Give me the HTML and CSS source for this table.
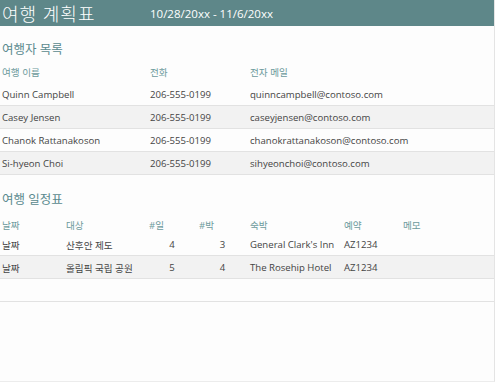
FILE: index.html
```html
<!DOCTYPE html>
<html lang="ko">
<head>
<meta charset="UTF-8" />
<title>여행 계획표</title>
<link rel="stylesheet" href="styles.css">
</head>
<body>
<div class="page">
    <div class="banner">
        <span class="banner-title">여행 계획표</span>
        <span class="banner-dates">10/28/20xx - 11/6/20xx</span>
    </div>

    <h2 class="section-title">여행자 목록</h2>
    <table class="grid travelers">
        <colgroup>
            <col style="width:148px">
            <col style="width:100px">
            <col>
        </colgroup>
        <thead>
            <tr><th>여행 이름</th><th>전화</th><th>전자 메일</th></tr>
        </thead>
        <tbody>
            <tr><td>Quinn Campbell</td><td>206-555-0199</td><td>quinncampbell@contoso.com</td></tr>
            <tr><td>Casey Jensen</td><td>206-555-0199</td><td>caseyjensen@contoso.com</td></tr>
            <tr><td>Chanok Rattanakoson</td><td>206-555-0199</td><td>chanokrattanakoson@contoso.com</td></tr>
            <tr><td>Si-hyeon Choi</td><td>206-555-0199</td><td>sihyeonchoi@contoso.com</td></tr>
        </tbody>
    </table>

    <h2 class="section-title second">여행 일정표</h2>
    <table class="grid schedule">
        <colgroup>
            <col style="width:64px">
            <col style="width:83px">
            <col style="width:50px">
            <col style="width:51px">
            <col style="width:94px">
            <col style="width:59px">
            <col>
        </colgroup>
        <thead>
            <tr><th>날짜</th><th>대상</th><th>#일</th><th>#박</th><th>숙박</th><th>예약</th><th>메모</th></tr>
        </thead>
        <tbody>
            <tr><td>날짜</td><td>산후안 제도</td><td class="num">4</td><td class="num">3</td><td>General Clark's Inn</td><td>AZ1234</td><td></td></tr>
            <tr><td>날짜</td><td>올림픽 국립 공원</td><td class="num">5</td><td class="num">4</td><td>The Rosehip Hotel</td><td>AZ1234</td><td></td></tr>
            <tr class="blank"><td></td><td></td><td></td><td></td><td></td><td></td><td></td></tr>
        </tbody>
    </table>
</div>
</body>
</html>
```

FILE: styles.css
```css
body {
    margin: 0;
    background: #fff;
    font-family: "Open Sans", "Noto Sans CJK KR", sans-serif;
    color: #444;
}
.page {
    width: 494px;
    height: 381px;
    border-right: 1px solid #e4e4e4;
    border-bottom: 1px solid #ececec;
    background: #fdfdfd;
    overflow: hidden;
}
.banner {
    display: flex;
    align-items: center;
    height: 26px;
    background: #5e8789;
    color: #fff;
    padding-left: 2px;
}
.banner-title {
    width: 148px;
    font-size: 18px;
    font-weight: 300;
    letter-spacing: 1px;
}
.banner-dates {
    font-size: 11.5px;
    padding-top: 1px;
}
.section-title {
    margin: 13px 0 0 2px;
    height: 20px;
    font-size: 12.5px;
    font-weight: normal;
    color: #5a8a8e;
}
.section-title.second {
    margin-top: 14px;
}
.grid {
    width: 494px;
    border-collapse: collapse;
    table-layout: fixed;
    font-size: 9.6px;
    margin-top: 2px;
}
.grid th {
    font-weight: normal;
    text-align: left;
    color: #6c9a9c;
    height: 22px;
    padding: 0 0 0 2px;
}
.grid td {
    height: 21px;
    padding: 1px 0 0 2px;
    white-space: nowrap;
    border-top: 1px solid #e2e2e2;
}
.grid tbody tr:first-child td {
    border-top: none;
}
.grid tbody tr:nth-child(even) td {
    background: #f2f2f2;
}
.grid tbody tr:last-child td {
    border-bottom: 1px solid #e2e2e2;
}
.grid td.num {
    text-align: center;
    padding-left: 0;
}
.schedule {
    margin-top: 3px;
}
.schedule th {
    height: 20px;
    vertical-align: bottom;
    padding-bottom: 1px;
}
```
